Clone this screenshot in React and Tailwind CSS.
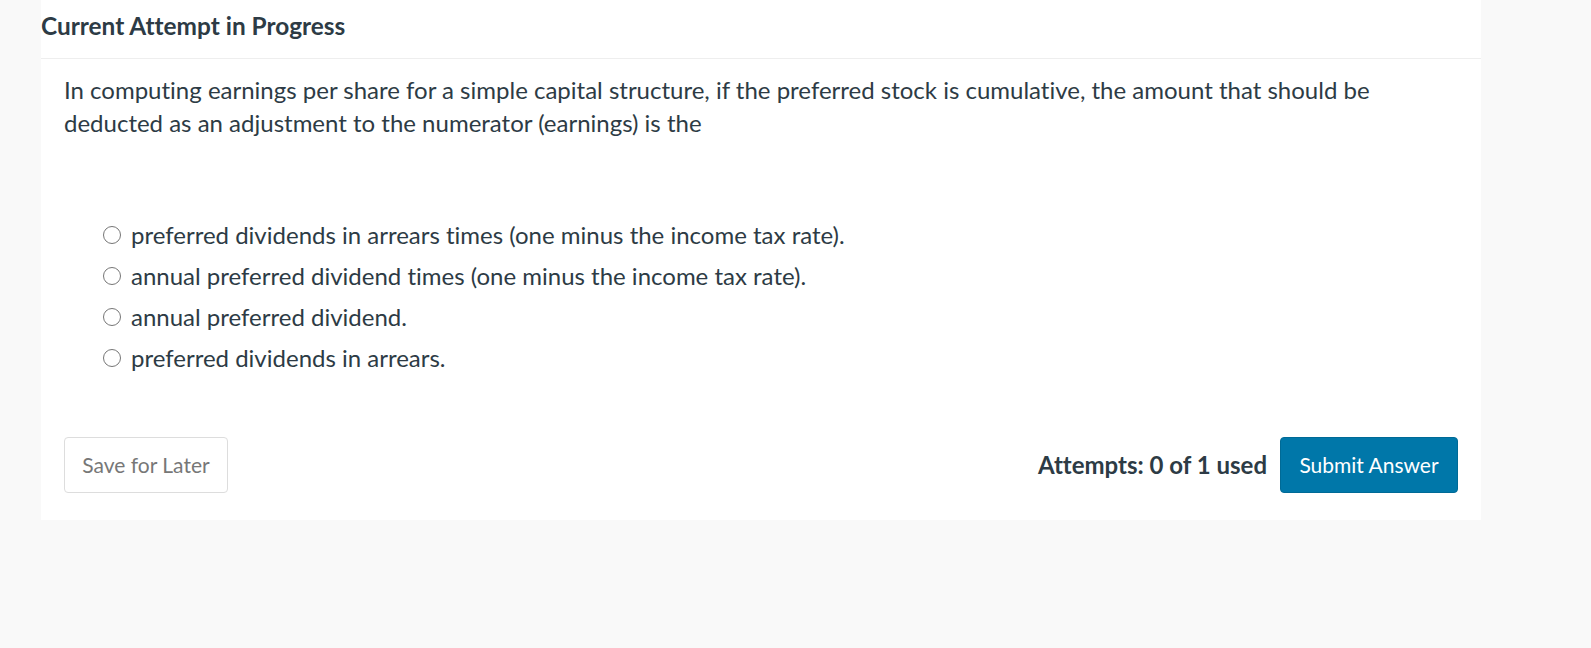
import React, { useState } from 'react';

const options = [
  'preferred dividends in arrears times (one minus the income tax rate).',
  'annual preferred dividend times (one minus the income tax rate).',
  'annual preferred dividend.',
  'preferred dividends in arrears.'
];

const App = () => {
  const [selected, setSelected] = useState(null);

  return (
    <div className="min-h-screen bg-[#f9f9f9] font-['Lato',sans-serif] text-[#2d3b45] [font-variant-ligatures:none]">
      <div className="ml-[41px] w-[1440px] bg-white pb-[27px]">
        {/* Header */}
        <h2 className="h-[59px] border-b border-[#eeeeee] pt-[12px] text-[24.4px] font-bold leading-[28px]">
          Current Attempt in Progress
        </h2>

        {/* Question */}
        <div className="px-[23px] pt-[14px]">
          <p className="text-[24px] leading-[33px]">
            In computing earnings per share for a simple capital structure, if the preferred stock is cumulative, the amount that should be deducted as an adjustment to the numerator (earnings) is the
          </p>

          <ul className="mt-[75px] ml-[39px] flex flex-col">
            {options.map((opt, i) => (
              <li key={i}>
                <label className="flex cursor-pointer items-center gap-[10px] text-[24px] leading-[41px]">
                  <input
                    type="radio"
                    name="answer"
                    checked={selected === i}
                    onChange={() => setSelected(i)}
                    className="sr-only"
                  />
                  <span className="flex h-[18px] w-[18px] shrink-0 items-center justify-center rounded-full border-[1.5px] border-[#767676] bg-white">
                    {selected === i && <span className="h-[8px] w-[8px] rounded-full bg-[#2d3b45]" />}
                  </span>
                  <span>{opt}</span>
                </label>
              </li>
            ))}
          </ul>

          {/* Actions */}
          <div className="mt-[59px] flex items-center justify-between">
            <button className="h-[56px] w-[164px] rounded-[4px] border border-[#dddddd] bg-white text-[21px] text-[#777777]">
              Save for Later
            </button>
            <div className="flex items-center gap-[13px]">
              <span className="text-[24px] font-bold">Attempts: 0 of 1 used</span>
              <button className="h-[56px] w-[178px] rounded-[4px] border border-[#006a96] bg-[#0077a9] text-[21px] text-white">
                Submit Answer
              </button>
            </div>
          </div>
        </div>
      </div>
    </div>
  );
};

export default App;
